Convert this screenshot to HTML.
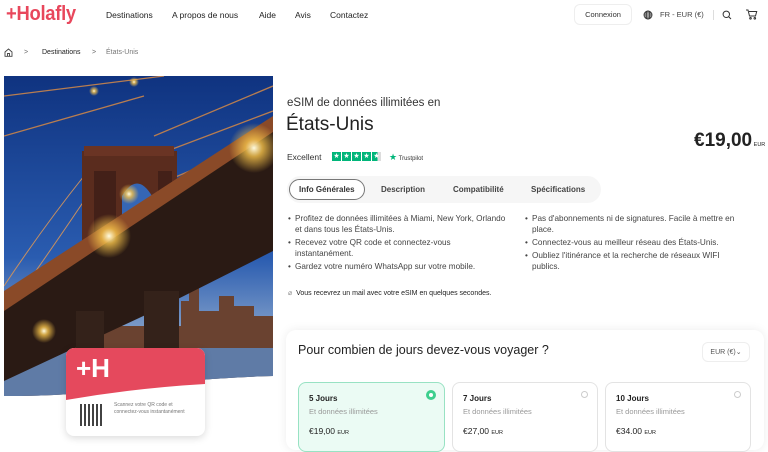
<!DOCTYPE html>
<html><head><meta charset="utf-8"><style>
*{margin:0;padding:0;box-sizing:border-box}
body{width:768px;height:440px;overflow:hidden;background:#fff;font-family:"Liberation Sans",sans-serif;color:#222;position:relative}
.a{position:absolute;white-space:nowrap}
.nav{font-size:8.5px;color:#222;top:10px}
.b{font-size:8.2px;color:#444;line-height:11px}
.b li{list-style:none;position:relative;padding-left:7px;margin-bottom:2px;white-space:normal}
.b li:before{content:"•";position:absolute;left:0}
.card{position:absolute;top:382px;height:70px;border:1px solid #e3e3e3;border-radius:8px;background:#fff}
.card .t{position:absolute;left:10px;top:11px;font-size:8px;font-weight:bold;color:#222}
.card .s{position:absolute;left:10px;top:24px;font-size:7.5px;color:#999}
.card .p{position:absolute;left:10px;top:43px;font-size:8.5px;color:#222}
.card .p small{font-size:5.5px}
.card .r{position:absolute;right:9px;top:8px;width:7px;height:7px;border-radius:50%;border:1px solid #ccc}
</style></head><body>
<div class="a" style="left:6px;top:3px;font-size:20px;color:#e8475c;letter-spacing:-0.3px;font-weight:bold;transform:scaleX(.92);transform-origin:left">+Holafly</div>
<div class="a nav" style="left:106px">Destinations</div>
<div class="a nav" style="left:172px">A propos de nous</div>
<div class="a nav" style="left:259px">Aide</div>
<div class="a nav" style="left:295px">Avis</div>
<div class="a nav" style="left:330px">Contactez</div>
<div class="a" style="left:574px;top:4px;width:58px;height:21px;border:1px solid #eee;border-radius:6px;font-size:7.5px;text-align:center;line-height:20px;color:#333">Connexion</div>
<svg class="a" style="left:643px;top:10px" width="10" height="10" viewBox="0 0 10 10" fill="none" stroke="#333" stroke-width=".9"><circle cx="5" cy="5" r="4"/><ellipse cx="5" cy="5" rx="1.8" ry="4"/><path d="M1 5h8M1.6 3h6.8M1.6 7h6.8"/></svg>
<div class="a" style="left:660px;top:10px;font-size:7.5px;color:#444">FR - EUR (€)</div>
<div class="a" style="left:713px;top:10px;width:1px;height:10px;background:#ddd"></div>
<svg class="a" style="left:722px;top:10px" width="10" height="10" viewBox="0 0 10 10" fill="none" stroke="#333" stroke-width="1"><circle cx="4.3" cy="4.3" r="3.2"/><path d="M6.6 6.6L9 9"/></svg>
<svg class="a" style="left:745px;top:8px" width="13" height="12" viewBox="0 0 13 12" fill="none" stroke="#333" stroke-width="1"><path d="M1 2h2l1.5 6h6l1.2-4.5H4"/><circle cx="5.5" cy="10.3" r=".8"/><circle cx="9.8" cy="10.3" r=".8"/></svg>

<svg class="a" style="left:4px;top:48px" width="9" height="9" viewBox="0 0 9 9" fill="none" stroke="#444" stroke-width=".9"><path d="M1 4L4.5 1 8 4v4.3H1z M3.5 8.3V5.5h2v2.8"/></svg>
<div class="a" style="left:24px;top:49px;font-size:7px;color:#666">&gt;</div>
<div class="a" style="left:42px;top:49px;font-size:7px;color:#222">Destinations</div>
<div class="a" style="left:92px;top:49px;font-size:7px;color:#666">&gt;</div>
<div class="a" style="left:106px;top:49px;font-size:7px;color:#777">États-Unis</div>

<svg class="a" style="left:4px;top:76px" width="269" height="364" viewBox="0 0 269 364">
<defs><linearGradient id="sky" x1="0" y1="0" x2="0" y2="1"><stop offset="0" stop-color="#0f3380"/><stop offset=".55" stop-color="#2a5cb0"/><stop offset=".8" stop-color="#8aa6cc"/></linearGradient>
<radialGradient id="gl"><stop offset="0" stop-color="#fffbe0"/><stop offset=".35" stop-color="#f5c24a" stop-opacity=".8"/><stop offset="1" stop-color="#f5c24a" stop-opacity="0"/></radialGradient></defs>
<clipPath id="c"><path d="M0 0H269V300 Q200 302 140 310 Q80 320 0 320Z"/></clipPath>
<g clip-path="url(#c)">
<rect width="269" height="330" fill="url(#sky)"/>
<path d="M0 250h15v-12h12v8h20v-6h30v10h100v-25h8v-30h10v40h20v-15h15v10h20v10h19v80H0z" fill="#6a4230"/>
<rect x="0" y="272" width="269" height="60" fill="#5f7ba6"/>
<path d="M0 20 L160 0 M0 60 L140 20 M150 60 L269 10 M150 80 L269 35 M150 110 L269 60" stroke="#b87d50" stroke-width="1.3" fill="none"/>
<path d="M0 210 Q40 150 80 100 M0 240 Q50 170 90 110" stroke="#c89060" stroke-width="1" fill="none"/>
<path d="M78 75 h95 v160 h-95z" fill="#5a2c1e"/>
<path d="M80 70 h90 v10 h-90z" fill="#6a3424"/>
<path d="M118 120 q15-25 30 0 v80 h-30z" fill="#3566b5"/>
<path d="M90 95 h22 v100 h-22z M154 95 h14 v80 h-14z" fill="#432018"/>
<path d="M0 225 L269 48 V175 L150 235 L0 305Z" fill="#2a1a14"/>
<path d="M0 215 L269 40 V56 L0 235Z" fill="#8a4a28"/>
<path d="M72 235 h28 v90 h-28z M140 215 h35 v110 h-35z" fill="#34221a"/>
<circle cx="250" cy="72" r="25" fill="url(#gl)"/><circle cx="105" cy="160" r="22" fill="url(#gl)"/><circle cx="125" cy="118" r="10" fill="url(#gl)"/><circle cx="40" cy="255" r="12" fill="url(#gl)"/><circle cx="90" cy="15" r="5" fill="url(#gl)"/><circle cx="130" cy="6" r="5" fill="url(#gl)"/>
</g>
</svg>
<div class="a" style="left:66px;top:348px;width:139px;height:88px;border-radius:8px;background:#fff;box-shadow:0 2px 8px rgba(0,0,0,.15);overflow:hidden">
<svg width="139" height="52" style="display:block"><path d="M0 0H139V36 Q70 40 0 52Z" fill="#e5495d"/></svg>
<div style="position:absolute;left:10px;top:5px;font-size:26px;font-weight:bold;color:#fff">+H</div>
<div style="position:absolute;left:14px;top:56px;width:22px;height:22px;background:repeating-linear-gradient(90deg,#222 0 2px,#fff 2px 4px),#222;opacity:.85"></div>
<div style="position:absolute;left:48px;top:54px;font-size:5px;color:#777;line-height:7px">Scannez votre QR code et<br>connectez-vous instantanément</div>
</div>

<div class="a" style="left:287px;top:97px;font-size:11.5px;color:#333">eSIM de données illimitées en</div>
<div class="a" style="left:286px;top:114px;font-size:19px;color:#222">États-Unis</div>
<div class="a" style="left:694px;top:130px;font-size:19px;font-weight:bold;color:#222">€19,00<span style="font-size:5.5px;font-weight:normal"> EUR</span></div>
<div class="a" style="left:287px;top:152px;font-size:8.5px;color:#333">Excellent</div>
<div class="a" style="left:332px;top:152px;display:flex;gap:1px">
<span style="width:9px;height:9px;background:#00b67a;color:#fff;font-size:7px;text-align:center;line-height:9px">★</span><span style="width:9px;height:9px;background:#00b67a;color:#fff;font-size:7px;text-align:center;line-height:9px">★</span><span style="width:9px;height:9px;background:#00b67a;color:#fff;font-size:7px;text-align:center;line-height:9px">★</span><span style="width:9px;height:9px;background:#00b67a;color:#fff;font-size:7px;text-align:center;line-height:9px">★</span><span style="width:9px;height:9px;background:linear-gradient(90deg,#00b67a 60%,#ddd 60%);color:#fff;font-size:7px;text-align:center;line-height:9px">★</span></div>
<div class="a" style="left:389px;top:152px;font-size:6px;color:#333"><span style="color:#00b67a;font-size:9px">★</span> Trustpilot</div>

<div class="a" style="left:287px;top:176px;width:314px;height:27px;background:#f6f6f6;border-radius:14px"></div>
<div class="a" style="left:289px;top:179px;width:76px;height:21px;border:1px solid #777;border-radius:11px;background:#fff"></div>
<div class="a" style="left:299px;top:185px;font-size:8px;font-weight:bold;color:#333">Info Générales</div>
<div class="a" style="left:381px;top:185px;font-size:8px;font-weight:bold;color:#444">Description</div>
<div class="a" style="left:453px;top:185px;font-size:8px;font-weight:bold;color:#444">Compatibilité</div>
<div class="a" style="left:531px;top:185px;font-size:8px;font-weight:bold;color:#444">Spécifications</div>

<ul class="a b" style="left:288px;top:213px;width:226px">
<li>Profitez de données illimitées à Miami, New York, Orlando et dans tous les États-Unis.</li>
<li style="padding-right:40px">Recevez votre QR code et connectez-vous instantanément.</li>
<li>Gardez votre numéro WhatsApp sur votre mobile.</li></ul>
<ul class="a b" style="left:525px;top:213px;width:232px">
<li>Pas d'abonnements ni de signatures. Facile à mettre en place.</li>
<li>Connectez-vous au meilleur réseau des États-Unis.</li>
<li style="padding-right:20px">Oubliez l'itinérance et la recherche de réseaux WIFI publics.</li></ul>
<div class="a" style="left:288px;top:289px;font-size:7px;color:#222"><span style="color:#888">⌀</span>&nbsp; Vous recevrez un mail avec votre eSIM en quelques secondes.</div>

<div class="a" style="left:286px;top:330px;width:478px;height:120px;border-radius:10px;background:#fff;box-shadow:0 0 10px rgba(0,0,0,.08)"></div>
<div class="a" style="left:298px;top:343px;font-size:12.5px;color:#222">Pour combien de jours devez-vous voyager ?</div>
<div class="a" style="left:702px;top:342px;width:48px;height:20px;border:1px solid #eee;border-radius:6px;font-size:7px;color:#555;text-align:center;line-height:19px">EUR (€)⌄</div>
<div class="card" style="left:298px;width:147px;background:#ebfbf4;border-color:#98e2c3"><div class="t">5 Jours</div><div class="s">Et données illimitées</div><div class="p">€19,00 <small>EUR</small></div><div class="r" style="border:2px solid #3ecf8e;background:#fff;width:8px;height:8px;box-shadow:0 0 0 1px #3ecf8e"></div></div>
<div class="card" style="left:452px;width:146px"><div class="t">7 Jours</div><div class="s">Et données illimitées</div><div class="p">€27,00 <small>EUR</small></div><div class="r"></div></div>
<div class="card" style="left:605px;width:146px"><div class="t">10 Jours</div><div class="s">Et données illimitées</div><div class="p">€34.00 <small>EUR</small></div><div class="r"></div></div>
</body></html>
